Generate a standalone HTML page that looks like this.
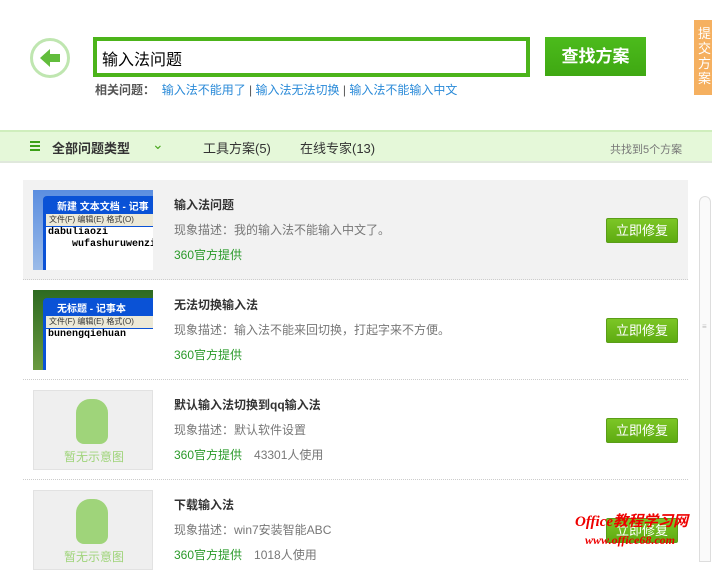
<!DOCTYPE html>
<html><head><meta charset="utf-8"><style>
*{margin:0;padding:0;box-sizing:border-box}
body{width:712px;height:562px;overflow:hidden;background:#fff;font-family:"Liberation Sans","Noto Sans CJK SC",sans-serif;position:relative;font-size:12px;color:#333}
.abs{position:absolute}
.back{left:30px;top:38px;width:40px;height:40px;border:3px solid #bfe6b0;border-radius:50%}
.search{left:93px;top:37px;width:437px;height:40px;border:4px solid #4cb41a;font-size:16px;color:#000;padding:5px 0 0 5px}
.sbtn{left:545px;top:37px;width:101px;height:39px;background:linear-gradient(#4cbb1c,#3fa812);color:#fff;font-size:17px;font-weight:bold;text-align:center;line-height:39px}
.tab{left:694px;top:20px;width:18px;height:75px;background:#f5b060;color:#fff;font-size:13px;line-height:15px;padding:6px 0 0 4px;overflow:hidden}
.rel{left:95px;top:81px;font-size:12px;color:#555}
.rel b{color:#555}
.rel a{color:#2a8ad8;text-decoration:none}
.bar{left:0;top:130px;width:712px;height:33px;background:#e5f8d9;border-top:2px solid #cfeebd;border-bottom:2px solid #e0e8dc}
.row{left:23px;width:665px;height:100px;border-bottom:1px dotted #ccc}
.thumb{left:10px;top:10px;width:120px;height:80px}
.t{left:151px;top:16px;font-size:12px;font-weight:bold;color:#333}
.d{left:151px;top:41px;color:#777;font-size:12px}
.p{left:151px;top:66px;color:#2a9a2a;font-size:12px}
.p span{color:#777;margin-left:12px}
.btn{left:583px;top:38px;width:72px;height:25px;background:linear-gradient(#7cc626,#5eab11);border:1px solid #5a9e18;border-radius:2px;color:#fff;text-align:center;line-height:23px;font-size:13px}
.ph{background:#efefef;border:1px solid #e2e2e2}
.win{background:#fff;overflow:hidden}
.mono{font-family:"Liberation Mono",monospace;font-size:10px;font-weight:bold;color:#000}
</style></head><body>
<div class="abs back"><svg width="34" height="34" style="position:absolute;left:0;top:0"><path d="M7 17 L17 8 L17 13 L27 13 L27 21 L17 21 L17 26 Z" fill="#62bd3c"/></svg></div>
<div class="abs search">输入法问题</div>
<div class="abs sbtn">查找方案</div>
<div class="abs tab">提交方案</div>
<div class="abs rel"><b>相关问题：</b>&nbsp; <a>输入法不能用了</a> | <a>输入法无法切换</a> | <a>输入法不能输入中文</a></div>
<div class="abs bar">
<div class="abs" style="left:30px;top:9px;width:10px;height:10px;background:repeating-linear-gradient(#3aa016 0 2px,transparent 2px 4px);"></div>
<div class="abs" style="left:52px;top:6px;font-size:13px;font-weight:bold;color:#333">全部问题类型</div>
<div class="abs" style="left:152px;top:4px;color:#4aa820;font-size:14px">⌄</div>
<div class="abs" style="left:203px;top:6px;font-size:13px;color:#333">工具方案(5)</div>
<div class="abs" style="left:300px;top:6px;font-size:13px;color:#333">在线专家(13)</div>
<div class="abs" style="left:610px;top:9px;font-size:11px;color:#777">共找到5个方案</div>
</div>

<div class="abs row" style="top:180px;background:#f2f2f2">
<div class="abs thumb" style="background:linear-gradient(#5b8ee0,#9bbbe8)">
<div class="abs" style="left:10px;top:6px;width:110px;height:74px;background:#0a52d6;border-radius:4px 0 0 0">
<div style="color:#fff;font-size:10px;padding:2px 0 0 14px;font-weight:bold">新建 文本文档 - 记事</div>
<div class="abs" style="left:3px;top:18px;width:107px;height:12px;background:#ece9d8;font-size:8px;padding-left:3px">文件(F) 编辑(E) 格式(O)</div>
<div class="abs win mono" style="left:3px;top:31px;width:107px;height:43px;padding-left:2px;line-height:12px">dabuliaozi<br>&nbsp;&nbsp;&nbsp;&nbsp;wufashuruwenzi</div></div></div>
<div class="abs t">输入法问题</div><div class="abs d">现象描述：我的输入法不能输入中文了。</div><div class="abs p">360官方提供</div><div class="abs btn">立即修复</div></div>

<div class="abs row" style="top:280px">
<div class="abs thumb" style="background:linear-gradient(#2d6a20,#6a9a40)">
<div class="abs" style="left:10px;top:8px;width:110px;height:72px;background:#0a52d6;border-radius:4px 0 0 0">
<div style="color:#fff;font-size:10px;padding:2px 0 0 14px;font-weight:bold">无标题 - 记事本</div>
<div class="abs" style="left:3px;top:18px;width:107px;height:12px;background:#ece9d8;font-size:8px;padding-left:3px">文件(F) 编辑(E) 格式(O)</div>
<div class="abs win mono" style="left:3px;top:31px;width:107px;height:41px;padding-left:2px;line-height:12px">bunengqiehuan</div></div></div>
<div class="abs t">无法切换输入法</div><div class="abs d">现象描述：输入法不能来回切换，打起字来不方便。</div><div class="abs p">360官方提供</div><div class="abs btn">立即修复</div></div>

<div class="abs row" style="top:380px">
<div class="abs thumb ph"><div class="abs" style="left:42px;top:8px;width:32px;height:45px;background:#9fd47a;border-radius:14px 14px 8px 8px"></div><div class="abs" style="left:30px;top:57px;color:#9fd47a;font-size:12px">暂无示意图</div></div>
<div class="abs t">默认输入法切换到qq输入法</div><div class="abs d">现象描述：默认软件设置</div><div class="abs p">360官方提供<span>43301人使用</span></div><div class="abs btn">立即修复</div></div>

<div class="abs row" style="top:480px;border:none">
<div class="abs thumb ph"><div class="abs" style="left:42px;top:8px;width:32px;height:45px;background:#9fd47a;border-radius:14px 14px 8px 8px"></div><div class="abs" style="left:30px;top:57px;color:#9fd47a;font-size:12px">暂无示意图</div></div>
<div class="abs t">下载输入法</div><div class="abs d">现象描述：win7安装智能ABC</div><div class="abs p">360官方提供<span>1018人使用</span></div><div class="abs btn">立即修复</div></div>

<div class="abs" style="left:699px;top:196px;width:12px;height:366px;border:1px solid #ddd;border-radius:6px 6px 0 0;background:#fafafa"></div>
<div class="abs" style="left:702px;top:322px;color:#bbb;font-size:8px">≡</div>
<div class="abs" style="left:575px;top:510px;color:#e00;font-size:15px;font-style:italic;font-weight:bold;font-family:'Liberation Serif','Noto Sans CJK SC',serif">Office教程学习网</div>
<div class="abs" style="left:585px;top:533px;color:#e00;font-size:12px;font-style:italic;font-weight:bold;font-family:'Liberation Serif',serif">www.office68.com</div>
</body></html>
